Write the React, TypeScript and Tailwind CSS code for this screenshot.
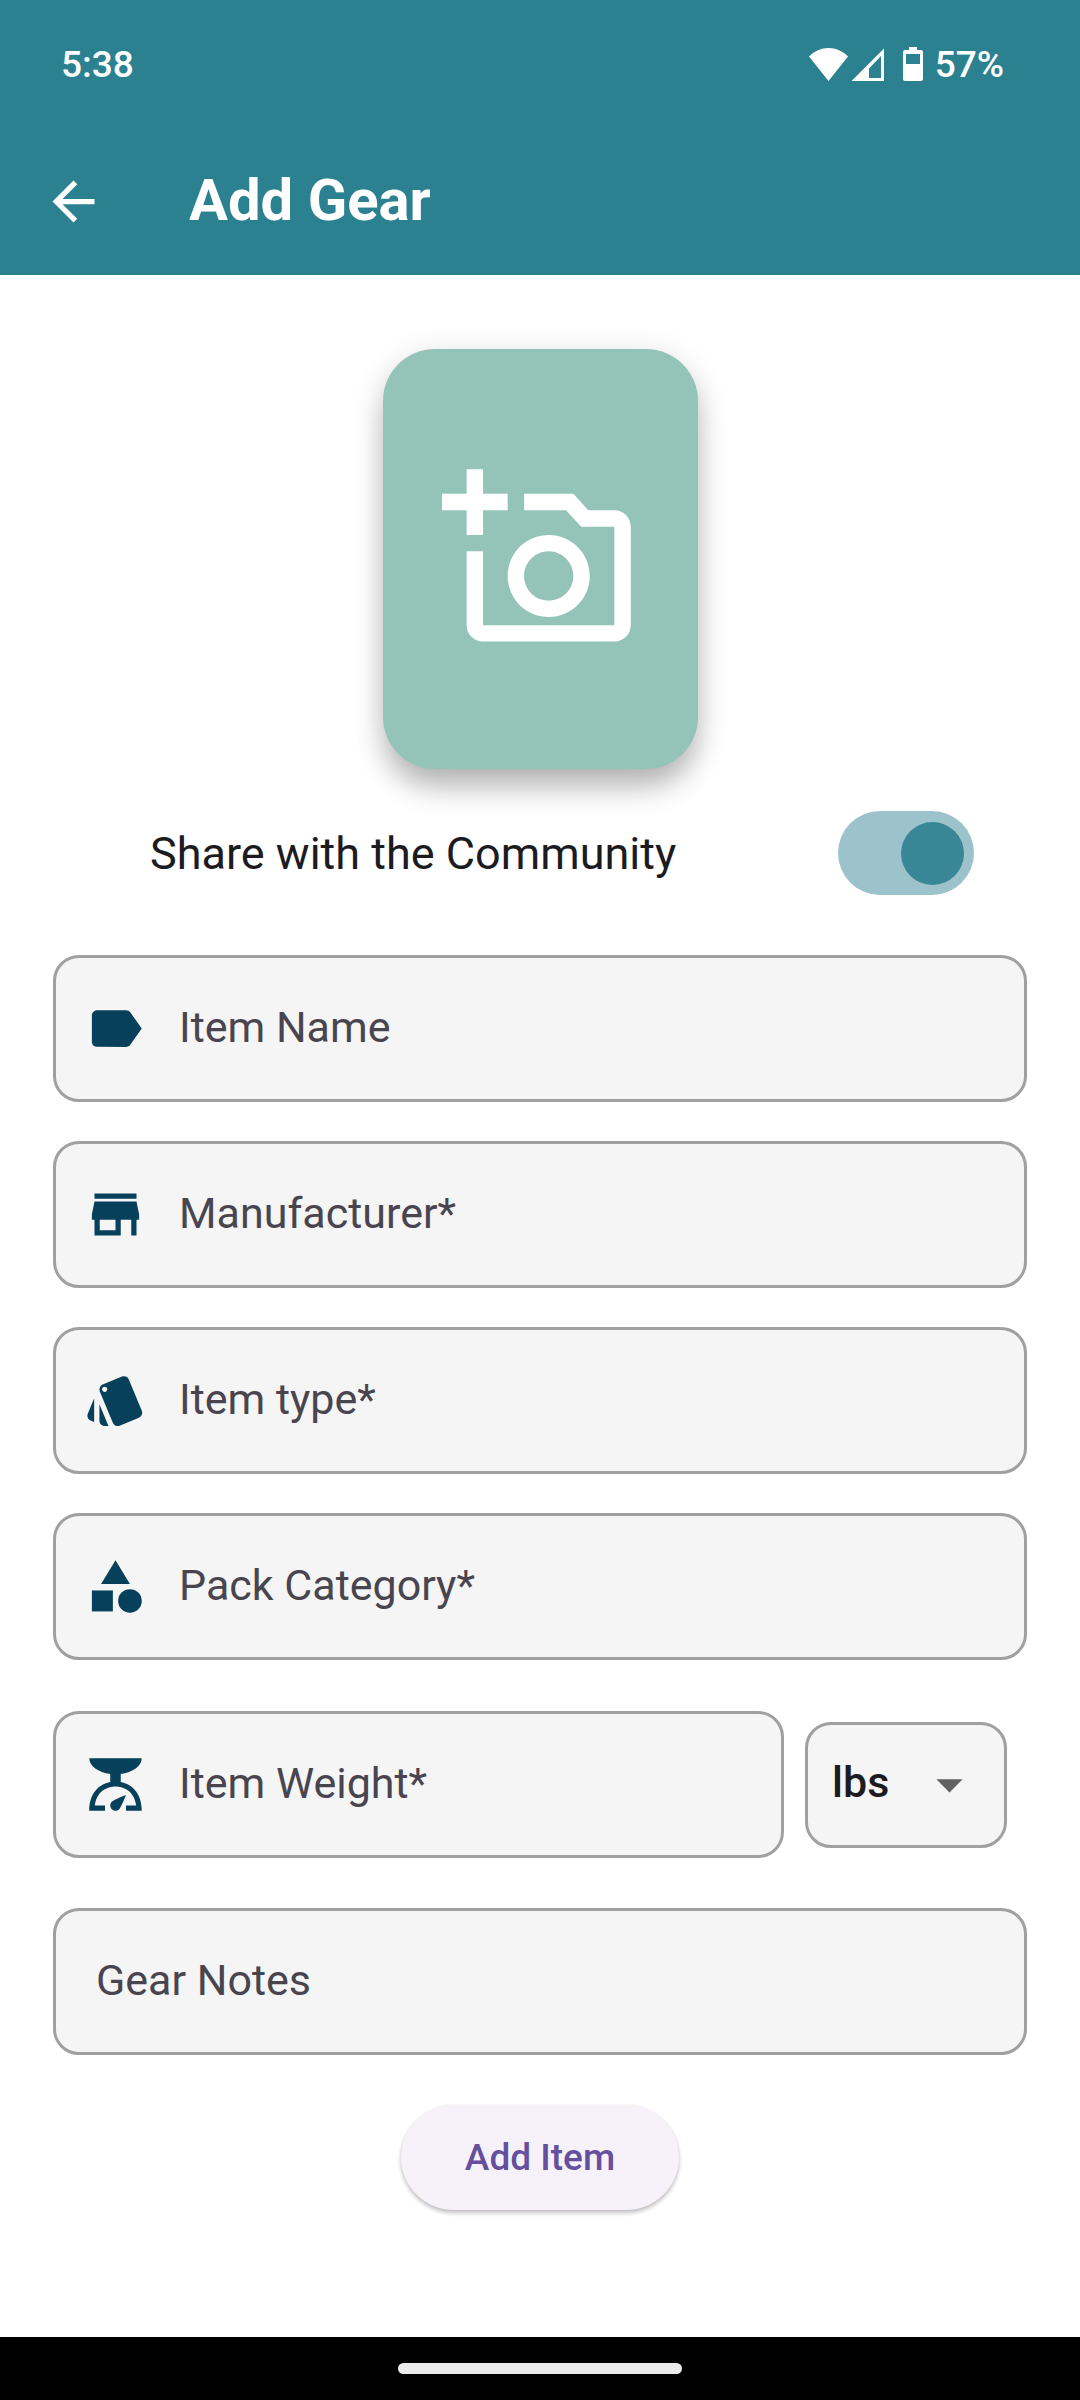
import { useState, type ComponentType } from "react";
import {
  MdArrowBack,
  MdArrowDropDown,
  MdCategory,
  MdLabel,
  MdOutlineAddAPhoto,
  MdScale,
  MdStore,
  MdStyle,
} from "react-icons/md";

type IconType = ComponentType<{ className?: string }>;

function StatusBar() {
  return (
    <div className="flex h-32 items-center justify-between pl-[61px] pr-[76px] text-[37px] font-medium leading-none">
      <span>5:38</span>
      <div className="flex items-center">
        <svg className="h-[34px] w-[116px]" viewBox="0 0 116 34" fill="currentColor" aria-hidden="true">
          <path d="M0 9.500C5.500 4 12 1 19.500 1S33.500 4 39 9.500L19.500 34Z" />
          <path
            fillRule="evenodd"
            d="M75 1.500V34H42.500ZM60 21.500V31H72V9Z"
          />
          <path
            fillRule="evenodd"
            d="M100 0h8v3h4a2 2 0 0 1 2 2v27a2 2 0 0 1-2 2H96a2 2 0 0 1-2-2V5a2 2 0 0 1 2-2h4ZM97 7v10h14V7Z"
          />
        </svg>
        <span className="ml-2.5">57%</span>
      </div>
    </div>
  );
}

function Field({ label, icon: Icon }: { label: string; icon?: IconType }) {
  return (
    <div className="flex h-[147px] min-w-0 flex-1 items-center rounded-[26px] border-[3px] border-[#a0a0a0] bg-[#f5f5f5] pl-7">
      {Icon && <Icon className="mr-8 size-[63px] shrink-0 text-[#07405b]" />}
      <input
        type="text"
        aria-label={label}
        placeholder={label}
        className={`h-full w-full min-w-0 bg-transparent pb-1 text-[43px] text-[#49454f] outline-none placeholder:text-[#49454f] ${
          Icon ? "" : "pl-3"
        }`}
      />
    </div>
  );
}

export default function App() {
  const [shared, setShared] = useState(true);
  const [unit, setUnit] = useState("lbs");

  return (
    <div className="flex min-h-screen flex-col bg-white font-['Roboto',sans-serif] text-[#1c1b1f]">
      <header className="bg-[#2c8191] text-white">
        <StatusBar />
        <div className="flex h-[147px] items-center pl-[42px]">
          <button type="button" aria-label="Back">
            <MdArrowBack className="size-[63px]" />
          </button>
          <h1 className="ml-[84px] pb-1 text-[58px] font-bold leading-none">Add Gear</h1>
        </div>
      </header>

      <main className="flex flex-1 flex-col px-[53px] pt-[74px]">
        <button
          type="button"
          aria-label="Add a photo"
          className="flex h-[420px] w-[315px] items-center justify-center self-center rounded-[52px] bg-[#94c3b8] text-white shadow-[0_22px_30px_-4px_rgba(0,0,0,0.24),0_6px_32px_rgba(0,0,0,0.13)]"
        >
          <MdOutlineAddAPhoto className="size-[197px]" />
        </button>

        <div className="mt-[42px] flex items-center justify-between pl-[97px] pr-[53px]">
          <label htmlFor="share" className="text-[45px] leading-none">
            Share with the Community
          </label>
          <input
            id="share"
            type="checkbox"
            role="switch"
            checked={shared}
            onChange={(e) => setShared(e.target.checked)}
            className="flex h-[84px] w-[136px] appearance-none items-center rounded-full bg-[#cfd8dc] px-[10px] before:size-[63px] before:rounded-full before:bg-[#388696] checked:justify-end checked:bg-[#9cc3cc]"
          />
        </div>

        <form className="mt-[60px] flex flex-col" onSubmit={(e) => e.preventDefault()}>
          <div className="flex flex-col gap-[39px]">
            <div className="flex"><Field label="Item Name" icon={MdLabel} /></div>
            <div className="flex"><Field label="Manufacturer*" icon={MdStore} /></div>
            <div className="flex"><Field label="Item type*" icon={MdStyle} /></div>
            <div className="flex"><Field label="Pack Category*" icon={MdCategory} /></div>
          </div>

          <div className="mt-[51px] flex items-center gap-[21px] pr-5">
            <Field label="Item Weight*" icon={MdScale} />
            <div className="relative h-[126px] w-[202px]">
              <select
                aria-label="Weight unit"
                value={unit}
                onChange={(e) => setUnit(e.target.value)}
                className="h-full w-full appearance-none rounded-[26px] border-[3px] border-[#a0a0a0] bg-[#f5f5f5] pb-1 pl-6 text-[43px] font-medium"
              >
                <option>lbs</option>
                <option>oz</option>
                <option>kg</option>
                <option>g</option>
              </select>
              <MdArrowDropDown className="pointer-events-none absolute inset-y-0 right-[26px] my-auto size-[63px] text-[#616161]" />
            </div>
          </div>

          <div className="mt-[50px] flex"><Field label="Gear Notes" /></div>

          <button
            type="submit"
            className="mt-[50px] h-[105px] self-center rounded-full bg-[#f7f2fa] px-16 text-[37px] font-medium text-[#65509f] shadow-[0_3px_4px_rgba(0,0,0,0.24),0_0_3px_rgba(0,0,0,0.06)]"
          >
            Add Item
          </button>
        </form>
      </main>

      <footer className="flex h-[63px] items-center justify-center bg-black">
        <div className="h-[11px] w-[284px] rounded-full bg-[#ebebeb]" />
      </footer>
    </div>
  );
}
